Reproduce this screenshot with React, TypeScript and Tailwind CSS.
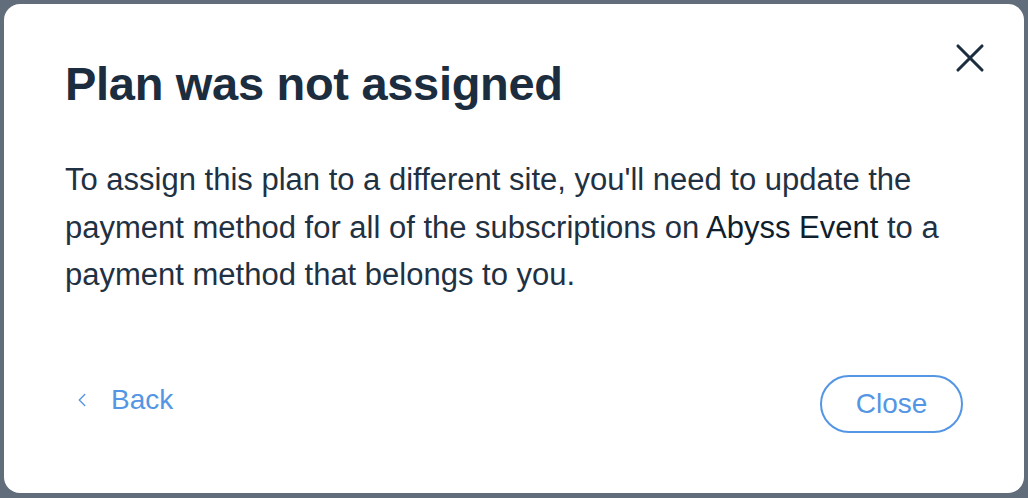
import React from 'react';
import { X, ChevronLeft } from 'lucide-react';

const font = { fontFamily: '"Liberation Sans", Arial, sans-serif' };

export default function App() {
  return (
    <div className="w-[1028px] h-[498px] bg-[#616d7a] pt-1 px-1 pb-[5px] flex" style={font}>
      <div className="relative flex-1 bg-white rounded-[16px] flex flex-col pl-[61px] pr-[61px] pt-[52px] pb-[60px]">
        <button className="absolute top-[30px] right-[30px] text-[#1b2d3e]">
          <X size={48} strokeWidth={1.55} />
        </button>
        <h1 className="text-[47px] leading-[56px] font-semibold text-[#1b2d3e] tracking-[-0.3px]">
          Plan was not assigned
        </h1>
        <p className="mt-[44px] text-[31px] leading-[47.5px] text-[#1f3142]">
          To assign this plan to a different site, you'll need to update the
          <br />
          payment method for all of the subscriptions on{' '}
          <span className="text-[#0f1f2e]">Abyss Event</span> to a
          <br />
          payment method that belongs to you.
        </p>
        <div className="mt-auto flex items-center justify-between">
          <button className="flex items-center gap-[18px] text-[#5496e4] text-[28px] mt-[-8px] ml-[6px]">
            <ChevronLeft size={22} strokeWidth={1.5} />
            <span>Back</span>
          </button>
          <button className="w-[143px] h-[58px] rounded-full border-2 border-[#5496e4] text-[#5496e4] text-[28px] flex items-center justify-center">
            Close
          </button>
        </div>
      </div>
    </div>
  );
}
